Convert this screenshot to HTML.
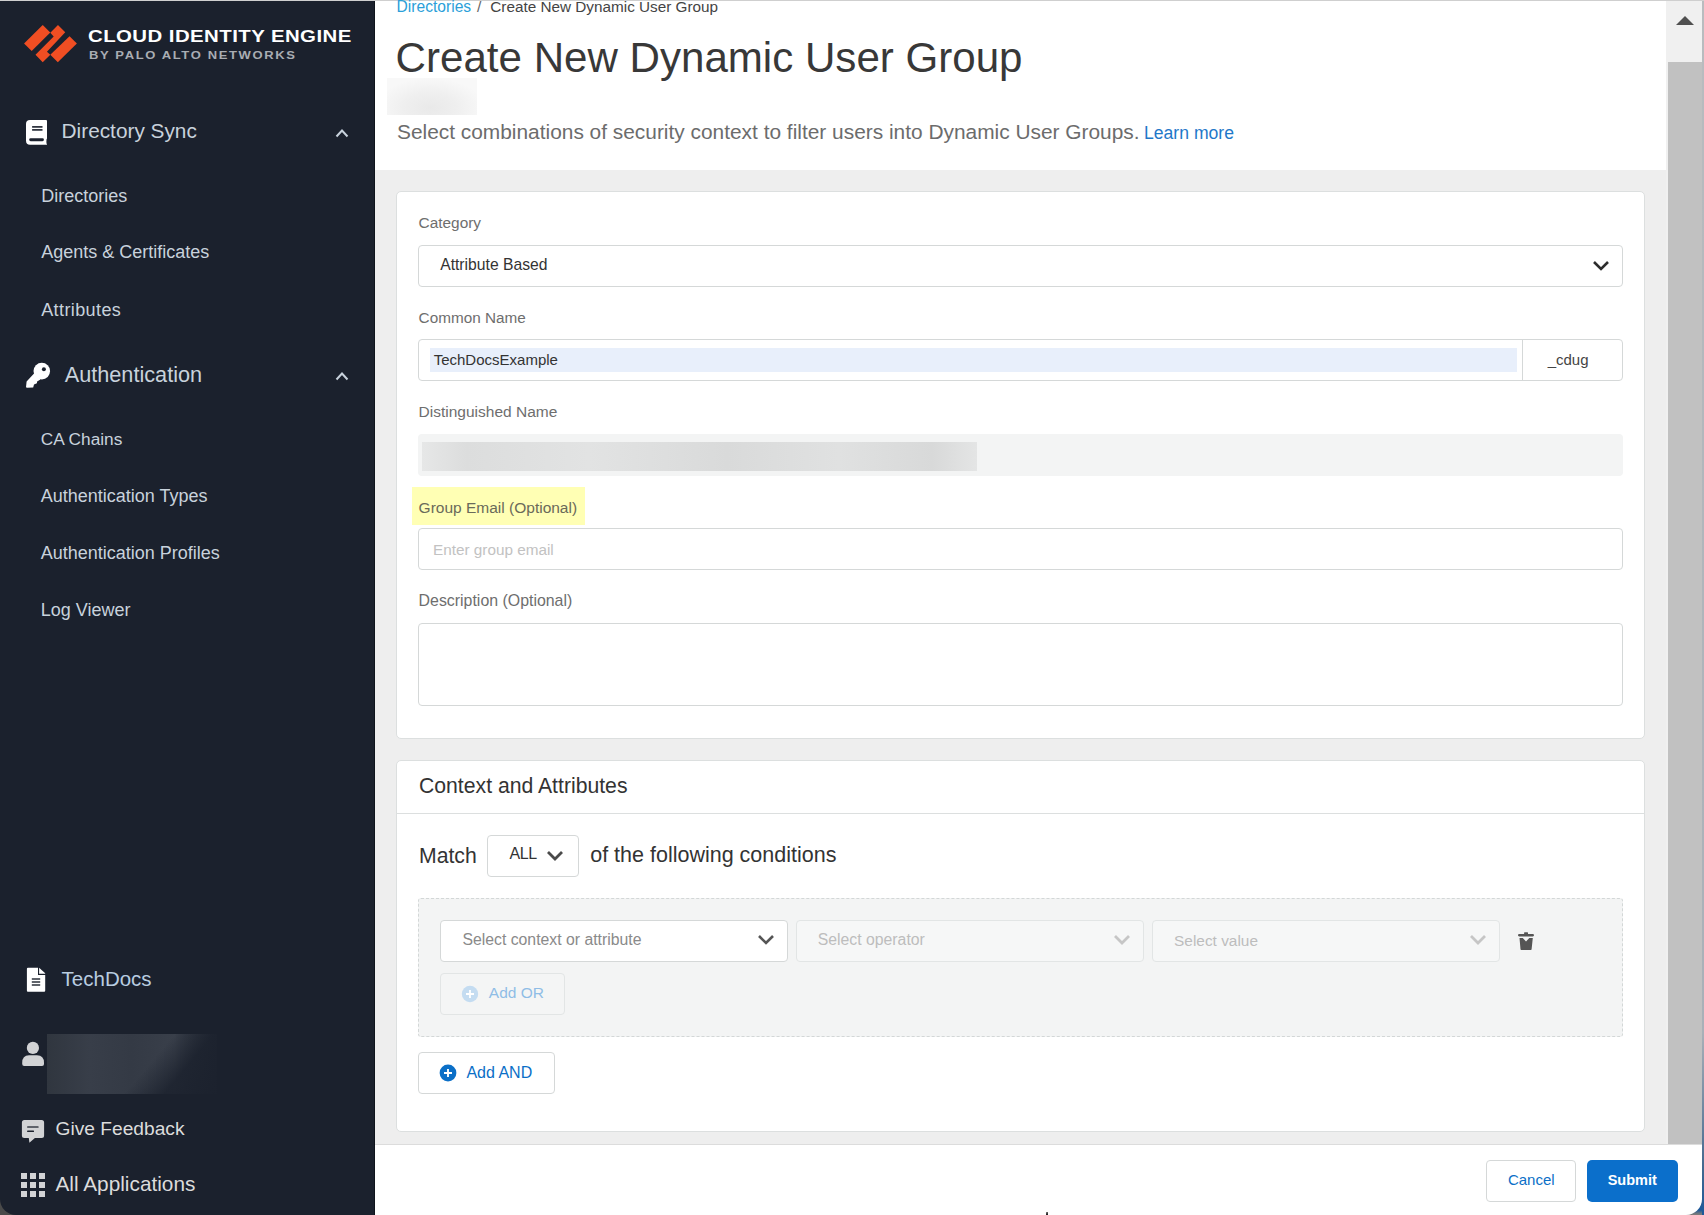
<!DOCTYPE html>
<html><head><meta charset="utf-8">
<style>
*{margin:0;padding:0;box-sizing:border-box}
html,body{width:1704px;height:1215px;overflow:hidden;background:#4a4a4a;font-family:"Liberation Sans",sans-serif}
.a{position:absolute}
.t{position:absolute;white-space:nowrap;line-height:1}
#side{position:absolute;left:0;top:1px;width:375px;height:1214px;background:#1b212d;border-bottom-left-radius:16px}
.sl{color:#c8d2dc;font-size:18px}
.bx{position:absolute;border:1px solid #d5d8d8;border-radius:4px;background:#fff}
.lbl{color:#6e6e6e;font-size:15.4px}
</style></head><body>
<!-- top line -->
<div class="a" style="left:0;top:0;width:1704px;height:1px;background:#cfcfcf"></div>
<!-- right strip -->
<div class="a" style="left:1684px;top:1190px;width:20px;height:25px;background:linear-gradient(#3e6288,#1b589a 80%,#7a7a7a 96%)"></div>
<div class="a" style="left:1702px;top:1px;width:2px;height:1214px;background:linear-gradient(#b9bcbf 0%,#a9b0b8 85%,#45698f 96%,#1b589a 100%)"></div>

<!-- SIDEBAR -->
<div id="side"></div>
<div class="a" style="left:374px;top:1px;width:1px;height:1214px;background:#0f141c"></div>
<svg class="a" style="left:0;top:0" width="100" height="70" viewBox="0 0 1704 1193">
<g fill="#f04e23">
<polygon points="410,743 728,425 857,553 540,870"/>
<polygon points="988,425 1112,550 800,880 857,932 728,1060 605,935 915,620 857,560"/>
<polygon points="857,935 1185,618 1310,740 985,1060"/>
</g></svg>
<div class="t" style="left:87.6px;top:27.9px;font-size:17px;font-weight:bold;color:#fff;letter-spacing:0.36px;transform:scaleX(1.2);transform-origin:0 0">CLOUD IDENTITY ENGINE</div>
<div class="t" style="left:89.4px;top:51px;font-size:10px;font-weight:bold;color:#a9adb3;letter-spacing:1.25px;transform:scaleX(1.3);transform-origin:0 0">BY PALO ALTO NETWORKS</div>

<!-- book icon -->
<svg class="a" style="left:20px;top:115px" width="35" height="35" viewBox="0 0 35 35">
<path d="M10 5H26Q27 5 27 6V29.7H10Q6 29.7 6 25.7V9Q6 5 10 5Z" fill="#fff"/>
<rect x="12.1" y="11.1" width="10.4" height="1.6" fill="#1b212d"/>
<rect x="12.1" y="14.1" width="10.4" height="1.6" fill="#1b212d"/>
<rect x="9.2" y="23.3" width="14.7" height="2.9" rx="1.4" fill="#1b212d"/>
<ellipse cx="27.6" cy="26.4" rx="1.2" ry="3.2" fill="#1b212d"/>
</svg>
<svg class="a" style="left:334px;top:127px" width="16" height="12" viewBox="0 0 16 12"><polyline points="2.5,9.5 8,3.5 13.5,9.5" fill="none" stroke="#c8d2dc" stroke-width="2"/></svg>
<!-- key icon -->
<svg class="a" style="left:20px;top:358px" width="35" height="35" viewBox="0 0 35 35">
<circle cx="21.8" cy="13.1" r="8.3" fill="#fff"/>
<polygon points="6,29.3 6.6,23.4 14.5,15.1 20.5,21.5 17.1,23.4 16.9,25.3 14,26.6 13.2,29.6 7,29.8" fill="#fff"/>
<circle cx="23.9" cy="11.2" r="2" fill="#1b212d"/>
</svg>
<svg class="a" style="left:334px;top:370px" width="16" height="12" viewBox="0 0 16 12"><polyline points="2.5,9.5 8,3.5 13.5,9.5" fill="none" stroke="#c8d2dc" stroke-width="2"/></svg>
<!-- techdocs icon -->
<svg class="a" style="left:18px;top:962px" width="35" height="35" viewBox="0 0 35 35">
<path d="M10 5.8H20V12.9H27.2V28.7Q27.2 29.7 26.2 29.7H9.9Q8.9 29.7 8.9 28.7V6.8Q8.9 5.8 10 5.8Z" fill="#fff"/>
<polygon points="21.1,5.8 27.2,11.2 27.2,11.8 21.1,11.8" fill="#fff"/>
<rect x="13.8" y="16.2" width="8.4" height="1.6" fill="#3a3f48"/>
<rect x="13.8" y="19.2" width="8.4" height="1.6" fill="#3a3f48"/>
<rect x="13.8" y="22.2" width="8.4" height="1.6" fill="#3a3f48"/>
</svg>
<!-- user icon -->
<svg class="a" style="left:15px;top:1030px" width="35" height="40" viewBox="0 0 35 40">
<circle cx="17.9" cy="17.9" r="6.1" fill="#d2d3d5"/>
<path d="M7.2 34V33Q7.2 25.3 14 25.3H22Q29 25.3 29 33V34Q29 36 27 36H9.2Q7.2 36 7.2 34Z" fill="#d2d3d5"/>
</svg>
<div class="a" style="left:47px;top:1034px;width:170px;height:60px;background:linear-gradient(130deg,rgba(27,33,45,0) 58%,rgba(27,33,45,0.85) 76%,rgba(27,33,45,0.95) 100%),linear-gradient(90deg,#30363f 0%,#383e49 25%,#343a45 50%,#393f4a 75%,#262c37 100%);"></div>
<!-- feedback icon -->
<svg class="a" style="left:15px;top:1113px" width="35" height="35" viewBox="0 0 35 35">
<path d="M9.4 7.1H26.6Q29.1 7.1 29.1 9.6V22.6Q29.1 25.1 26.6 25.1H19.9L14.4 29.7L13.8 25.1H9.4Q6.9 25.1 6.9 22.6V9.6Q6.9 7.1 9.4 7.1Z" fill="#d2d3d5"/>
<rect x="12.1" y="13.3" width="11.5" height="1.5" rx="0.5" fill="#3a3f48"/>
<rect x="12.1" y="17.5" width="6.9" height="1.5" rx="0.5" fill="#1b212d"/>
</svg>
<!-- grid icon -->
<svg class="a" style="left:21px;top:1173px" width="24" height="24" viewBox="0 0 24 24" fill="#d2d3d5">
<rect x="0" y="0" width="6" height="6"/><rect x="9" y="0" width="6" height="6"/><rect x="18" y="0" width="6" height="6"/>
<rect x="0" y="9" width="6" height="6"/><rect x="9" y="9" width="6" height="6"/><rect x="18" y="9" width="6" height="6"/>
<rect x="0" y="18" width="6" height="6"/><rect x="9" y="18" width="6" height="6"/><rect x="18" y="18" width="6" height="6"/>
</svg>
<div class="t sl" style="left:61.6px;top:121.2px;font-size:20.8px">Directory Sync</div>
<div class="t sl" style="left:41.2px;top:186.8px">Directories</div>
<div class="t sl" style="left:41.2px;top:243.4px">Agents &amp; Certificates</div>
<div class="t sl" style="left:41.2px;top:300.8px;letter-spacing:0.4px">Attributes</div>
<div class="t sl" style="left:64.7px;top:363.6px;font-size:21.7px">Authentication</div>
<div class="t sl" style="left:40.7px;top:430.5px;font-size:17.3px">CA Chains</div>
<div class="t sl" style="left:40.7px;top:487.1px">Authentication Types</div>
<div class="t sl" style="left:40.7px;top:543.7px">Authentication Profiles</div>
<div class="t sl" style="left:40.7px;top:600.5px">Log Viewer</div>
<div class="t sl" style="left:61.6px;top:969px;font-size:20.5px;color:#b9cde0">TechDocs</div>
<div class="t" style="left:55.5px;top:1118.8px;font-size:19.2px;color:#dcdcdc">Give Feedback</div>
<div class="t" style="left:55.5px;top:1174.4px;font-size:20.8px;color:#dcdcdc">All Applications</div>

<!-- MAIN -->
<div class="a" style="left:375px;top:1px;width:1292px;height:169px;background:#fff"></div>
<div class="a" style="left:375px;top:170px;width:1292px;height:974px;background:#eeeeee"></div>
<!-- scrollbar -->
<div class="a" style="left:1666px;top:1px;width:36px;height:1143px;background:#f0f0f0"></div>
<div class="a" style="left:1668px;top:62px;width:34px;height:1082px;background:#c1c1c1"></div>

<div class="t" style="left:396.6px;top:-1.4px;font-size:15.6px;color:#2b9fd9">Directories</div>
<div class="t" style="left:477px;top:-1.4px;font-size:15.5px;color:#666">/</div>
<div class="t" style="left:490.3px;top:-1.4px;font-size:15.3px;color:#444">Create New Dynamic User Group</div>
<div class="t" style="left:395.6px;top:36.8px;font-size:42.1px;color:#383838">Create New Dynamic User Group</div>
<div class="a" style="left:387px;top:78px;width:90px;height:37px;background:radial-gradient(ellipse 60% 80% at 48% 80%,#e9e9e9 0%,#efefef 50%,#f8f8f8 100%)"></div>
<div class="t" style="left:397px;top:122.2px;font-size:20.88px;color:#6c6c6c">Select combinations of security context to filter users into Dynamic User Groups.</div>
<div class="t" style="left:1144px;top:124.6px;font-size:17.6px;color:#1f78c9">Learn more</div>

<!-- CARD 1 -->
<div class="a" style="left:396px;top:191px;width:1249px;height:548px;background:#fff;border:1px solid #dcdfdf;border-radius:5px"></div>
<div class="t lbl" style="left:418.6px;top:214.9px">Category</div>
<div class="bx" style="left:418px;top:245px;width:1205px;height:42px"></div>
<div class="t" style="left:440.2px;top:256.5px;font-size:15.7px;color:#333">Attribute Based</div>
<svg class="a" style="left:1591px;top:259px" width="20" height="14" viewBox="0 0 20 14"><polyline points="3,3 10,10 17,3" fill="none" stroke="#2d2d2d" stroke-width="2.6"/></svg>

<div class="t lbl" style="left:418.6px;top:310px;font-size:15.3px">Common Name</div>
<div class="bx" style="left:418px;top:339px;width:1205px;height:42px"></div>
<div class="a" style="left:1522px;top:340px;width:1px;height:40px;background:#d5d8d8"></div>
<div class="a" style="left:430px;top:348px;width:1087px;height:24px;background:#e8effb"></div>
<div class="t" style="left:433.7px;top:352.2px;font-size:15px;color:#333">TechDocsExample</div>
<div class="t" style="left:1547.7px;top:352.3px;font-size:15px;color:#444">_cdug</div>

<div class="t lbl" style="left:418.6px;top:403.8px;font-size:15.5px">Distinguished Name</div>
<div class="a" style="left:418px;top:434px;width:1205px;height:42px;background:#f3f4f4;border-radius:4px"></div>
<div class="a" style="left:422px;top:442px;width:555px;height:29px;background:linear-gradient(90deg,#e6e7e7 0%,#dcdddd 8%,#e2e3e3 30%,#d9dada 55%,#e0e1e1 75%,#d8d9d9 92%,#e4e5e5 100%)"></div>

<div class="a" style="left:412px;top:487px;width:173px;height:38px;background:#ffffb4"></div>
<div class="t lbl" style="left:418.6px;top:499.7px;font-size:15.5px;color:#6a6a5a">Group Email (Optional)</div>
<div class="bx" style="left:418px;top:528px;width:1205px;height:42px"></div>
<div class="t" style="left:433px;top:541.7px;font-size:15.3px;color:#c2c2c2">Enter group email</div>

<div class="t lbl" style="left:418.6px;top:593.2px;font-size:15.9px">Description (Optional)</div>
<div class="bx" style="left:418px;top:623px;width:1205px;height:83px"></div>

<!-- CARD 2 -->
<div class="a" style="left:396px;top:760px;width:1249px;height:372px;background:#fff;border:1px solid #dcdfdf;border-radius:5px"></div>
<div class="t" style="left:419px;top:775.4px;font-size:21.2px;color:#333">Context and Attributes</div>
<div class="a" style="left:397px;top:813px;width:1247px;height:1px;background:#dcdfdf"></div>
<div class="t" style="left:419px;top:844.9px;font-size:21.2px;color:#333">Match</div>
<div class="bx" style="left:487px;top:835px;width:92px;height:42px"></div>
<div class="t" style="left:509.6px;top:846.4px;font-size:16px;letter-spacing:-0.5px;color:#333">ALL</div>
<svg class="a" style="left:545px;top:849px" width="20" height="14" viewBox="0 0 20 14"><polyline points="3,3 10,10 17,3" fill="none" stroke="#4a4a4a" stroke-width="2.8"/></svg>
<div class="t" style="left:590.2px;top:844.6px;font-size:21.5px;color:#333">of the following conditions</div>

<div class="a" style="left:418px;top:898px;width:1205px;height:139px;background:#f3f4f4;border:1px dashed #d3d7d7;border-radius:3px"></div>
<div class="bx" style="left:440px;top:920px;width:348px;height:42px"></div>
<div class="t" style="left:462.4px;top:932.4px;font-size:15.8px;color:#8a8a8a">Select context or attribute</div>
<svg class="a" style="left:756px;top:933px" width="20" height="14" viewBox="0 0 20 14"><polyline points="3,3 10,10 17,3" fill="none" stroke="#555" stroke-width="2.6"/></svg>
<div class="bx" style="left:796px;top:920px;width:348px;height:42px;background:#f6f7f7;border-color:#e2e5e5"></div>
<div class="t" style="left:817.7px;top:932.4px;font-size:15.8px;color:#bdbdbd">Select operator</div>
<svg class="a" style="left:1112px;top:933px" width="20" height="14" viewBox="0 0 20 14"><polyline points="3,3 10,10 17,3" fill="none" stroke="#c6c6c6" stroke-width="2.8"/></svg>
<div class="bx" style="left:1152px;top:920px;width:348px;height:42px;background:#f6f7f7;border-color:#e2e5e5"></div>
<div class="t" style="left:1174.1px;top:932.6px;font-size:15.4px;color:#bdbdbd">Select value</div>
<svg class="a" style="left:1468px;top:933px" width="20" height="14" viewBox="0 0 20 14"><polyline points="3,3 10,10 17,3" fill="none" stroke="#c6c6c6" stroke-width="2.8"/></svg>
<svg class="a" style="left:1505px;top:920px" width="40" height="40" viewBox="0 0 40 40"><g fill="#555">
<rect x="19.1" y="12.2" width="3.9" height="3" rx="0.6"/>
<rect x="13" y="14.1" width="16" height="2.3" rx="1.15"/>
<path d="M14.5 18.1H17.8L21 21.4L24.3 18.1H27.8L26.6 29.3Q26.5 29.9 25.9 29.9H16.2Q15.6 29.9 15.5 29.3Z"/>
</g></svg>

<div class="bx" style="left:440px;top:973px;width:125px;height:42px;background:#f4f5f5;border-color:#e2e5e5"></div>
<svg class="a" style="left:461px;top:985px" width="18" height="18" viewBox="0 0 18 18"><circle cx="9" cy="9" r="8.2" fill="#c4dcf1"/><path d="M9 5v8M5 9h8" stroke="#fff" stroke-width="1.8"/></svg>
<div class="t" style="left:488.8px;top:985.4px;font-size:15.5px;color:#8fbde6">Add OR</div>

<div class="bx" style="left:418px;top:1052px;width:137px;height:42px"></div>
<svg class="a" style="left:439px;top:1064px" width="18" height="18" viewBox="0 0 18 18"><circle cx="9" cy="9" r="8.4" fill="#0b6fc7"/><path d="M9 5v8M5 9h8" stroke="#fff" stroke-width="1.9"/></svg>
<div class="t" style="left:466.4px;top:1064.7px;font-size:16px;color:#0b6fc7">Add AND</div>

<!-- FOOTER -->
<div class="a" style="left:375px;top:1144px;width:1327px;height:71px;background:#fff;border-top:1px solid #dcdcdc;border-bottom-right-radius:16px"></div>
<div class="bx" style="left:1486px;top:1160px;width:90px;height:42px"></div>
<div class="t" style="left:1507.9px;top:1172.1px;font-size:15px;color:#0b6fc7">Cancel</div>
<div class="a" style="left:1587px;top:1160px;width:91px;height:42px;background:#0b6fcb;border-radius:5px"></div>
<div class="t" style="left:1607.7px;top:1172.5px;font-size:14.5px;font-weight:bold;color:#fff">Submit</div>
<!-- scroll arrow -->
<svg class="a" style="left:1675px;top:13px" width="20" height="14" viewBox="0 0 20 14"><polygon points="1,12 10,3 19,12" fill="#505050"/></svg>

<svg class="a" style="left:1045px;top:1212px" width="4" height="3" viewBox="0 0 4 3"><polygon points="1.5,0 2.6,0 3,3 1,3" fill="#111"/></svg>
</body></html>
